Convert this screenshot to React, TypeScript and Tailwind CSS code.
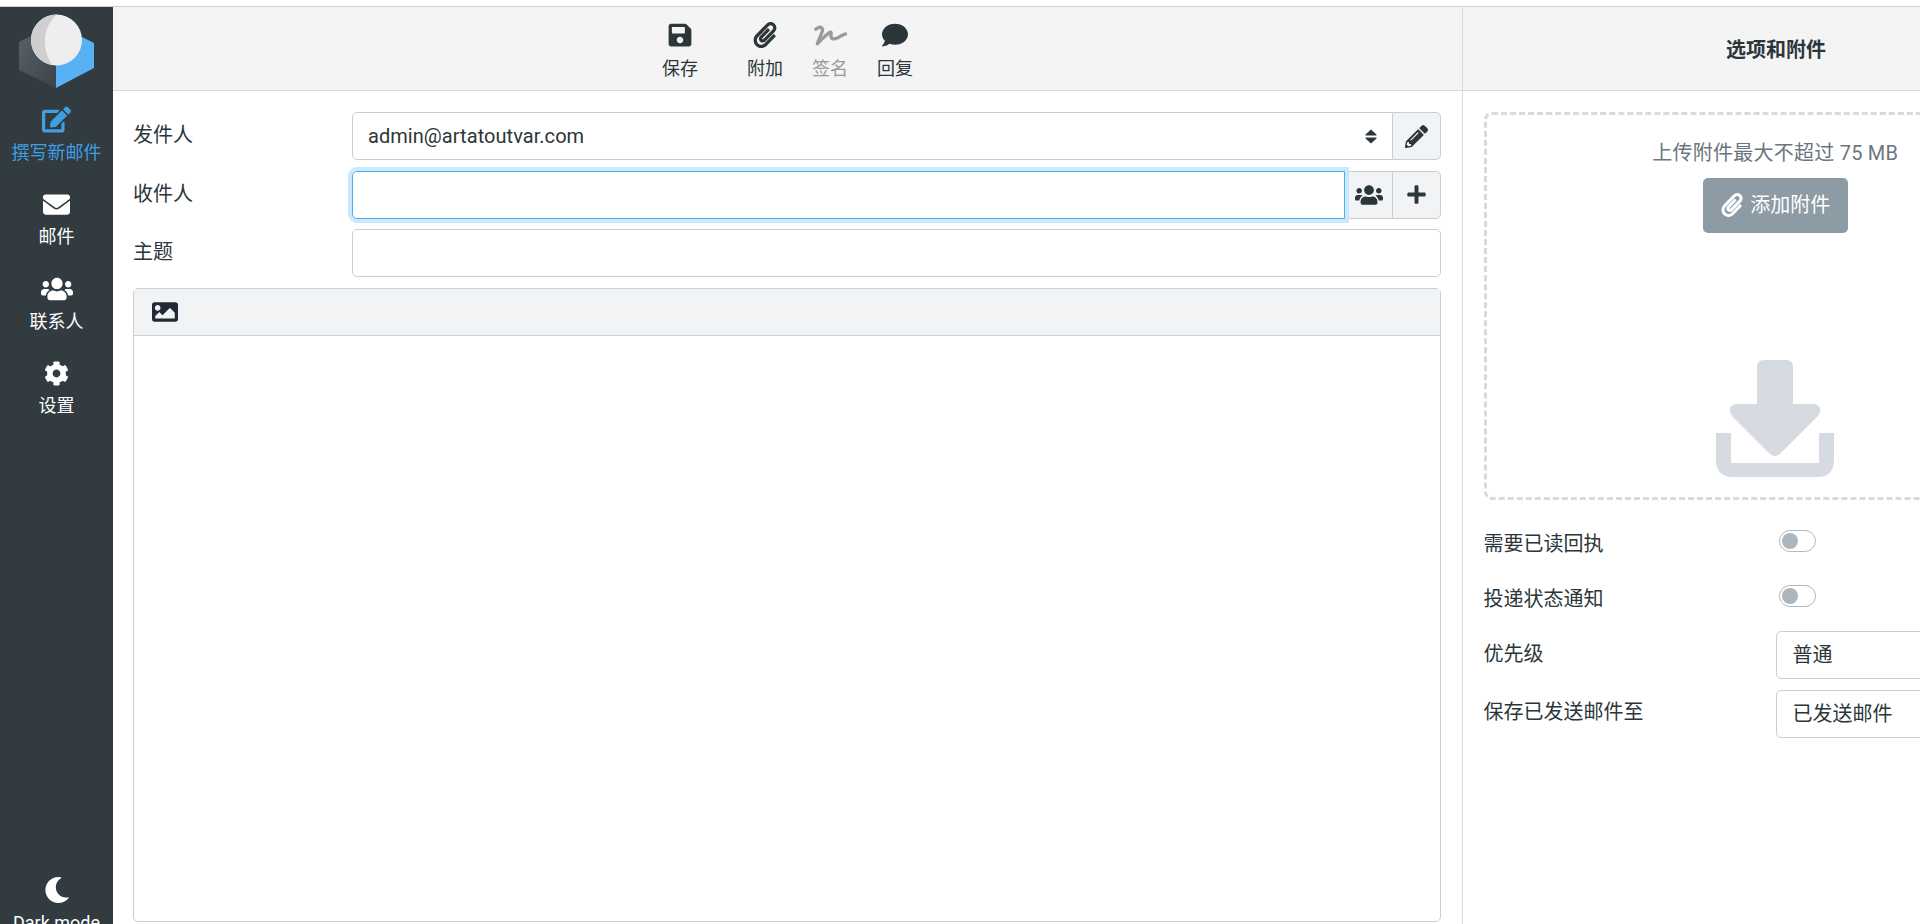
import React from "react";
import {
  FaEdit, FaEnvelope, FaUsers, FaCog, FaSave, FaPaperclip, FaSignature, FaComment,
  FaImage, FaPencilAlt, FaPlus, FaMoon,
} from "react-icons/fa";

const font = "[font-family:Roboto,'Noto_Sans_CJK_SC',sans-serif]";

function NavItem({ icon, label, active }: { icon: React.ReactNode; label: string; active?: boolean }) {
  return (
    <div className={`flex h-[84.5px] flex-col items-center ${active ? "text-[#3f9fe3]" : "text-white"}`}>
      <div className="mt-[18px] flex h-[28px] items-center justify-center">{icon}</div>
      <div className="mt-[5px] text-[18px] leading-[27px] whitespace-nowrap">{label}</div>
    </div>
  );
}

function ToolButton({ icon, label, muted }: { icon: React.ReactNode; label: string; muted?: boolean }) {
  return (
    <div className={`flex w-[65px] flex-col items-center ${muted ? "text-[#9a9a9a]" : "text-[#2c363a]"}`}>
      <div className="flex h-[32px] items-center justify-center">{icon}</div>
      <div className="mt-[4px] text-[18px] leading-[27px]">{label}</div>
    </div>
  );
}

function Field({ label, children }: { label: string; children: React.ReactNode }) {
  return (
    <div className="flex h-[48px]">
      <div className="w-[219px] shrink-0 pt-[8px] text-[20px] leading-[30px] text-[#2c363a]">{label}</div>
      <div className="flex min-w-0 flex-1">{children}</div>
    </div>
  );
}

function Addon({ children, last }: { children: React.ReactNode; last?: boolean }) {
  return (
    <div className={`flex w-[48px] shrink-0 items-center justify-center border-y border-r border-[#c9cfd3] bg-[#f1f3f5] text-[#2c363a] ${last ? "rounded-r-[5px]" : ""}`}>
      {children}
    </div>
  );
}

function Toggle() {
  return (
    <div className="flex h-[22px] w-[37px] items-center rounded-full border border-[#b4b9bf] bg-white pl-[2px]">
      <div className="h-[16px] w-[16px] rounded-full bg-[#adb5bd]" />
    </div>
  );
}

function SelectArrows() {
  return (
    <svg width="12" height="15" viewBox="0 0 12 15" className="block" fill="#2c363a">
      <path d="M6 0.5 L11.5 5.5 Q11.8 6.5 11 6.5 H1 Q0.2 6.5 0.5 5.5 Z" />
      <path d="M6 14.5 L11.5 9.5 Q11.8 8.5 11 8.5 H1 Q0.2 8.5 0.5 9.5 Z" />
    </svg>
  );
}

function UploadIcon() {
  return (
    <svg width="118" height="117" viewBox="0 0 118 117" className="block">
      <path
        d="M48 0 H 70 Q 77 0 77 7 V 44 H 98 Q 108 46 102 56 L 64 94 Q 59 98 54 94 L 16 56 Q 10 46 20 44 H 41 V 7 Q 41 0 48 0 Z"
        fill="#d5dbe0"
      />
      <path
        d="M0 73 H 15 V 103 H 103 V 73 H 118 V 100 Q 118 117 101 117 H 17 Q 0 117 0 100 Z"
        fill="#d5dbe0"
      />
    </svg>
  );
}

function Logo() {
  return (
    <svg width="113" height="84" viewBox="0 0 113 84" className="block">
      <defs>
        <linearGradient id="logoLeft" x1="0" y1="0" x2="1" y2="1">
          <stop offset="0" stopColor="#59636a" />
          <stop offset="1" stopColor="#3b4348" />
        </linearGradient>
      </defs>
      <path d="M19 35 L45 22 L56 58 V81 L19 63 Z" fill="url(#logoLeft)" />
      <path d="M56 58 L82 30 L94 36 V61 L56 81 Z" fill="#56b2f5" />
      <circle cx="56.5" cy="33" r="25.5" fill="#eeeeee" />
      <path d="M57 7.5 A25.5 25.5 0 0 0 52 58.1 C 42 42 42 20 57 7.5 Z" fill="#cfcfcf" />
    </svg>
  );
}

export default function App() {
  return (
    <div className={`h-[924px] w-[1920px] overflow-hidden bg-white ${font}`}>
      <div className="h-[6px] bg-white" />
      <div className="flex h-[918px] w-[2089px] border-t border-[#cfcfcf]">
        <nav className="flex w-[113px] shrink-0 flex-col bg-[#313b40]">
          <div className="h-[80.5px] shrink-0"><Logo /></div>
          <NavItem active icon={<FaEdit className="text-[29px]" />} label="撰写新邮件" />
          <NavItem icon={<FaEnvelope className="text-[27px]" />} label="邮件" />
          <NavItem icon={<FaUsers className="text-[32px]" />} label="联系人" />
          <NavItem icon={<FaCog className="text-[25px]" />} label="设置" />
          <div className="flex-1" />
          <div className="mb-[-12px] flex flex-col items-center text-white">
            <FaMoon className="text-[26px]" />
            <div className="mt-[6px] text-[18px] leading-[27px]">Dark mode</div>
          </div>
        </nav>

        <main className="flex w-[1349px] shrink-0 flex-col">
          <div className="flex h-[84px] shrink-0 justify-center border-b border-[#d4dbde] bg-[#f4f4f4] pt-[12px]">
            <ToolButton icon={<FaSave className="text-[26px]" />} label="保存" />
            <div className="w-[20px]" />
            <ToolButton icon={<FaPaperclip className="text-[26px]" />} label="附加" />
            <ToolButton muted icon={<FaSignature className="text-[33px]" />} label="签名" />
            <ToolButton icon={<FaComment className="text-[26px]" />} label="回复" />
          </div>
          <div className="flex flex-1 flex-col gap-[10.5px] pt-[21px] pr-[21px] pl-[20px]">
            <Field label="发件人">
              <div className="flex flex-1 items-center justify-between rounded-l-[5px] border border-[#c9cfd3] pr-[15px] pl-[15px] text-[20px] tracking-[0.05px] text-[#2c363a]">
                <span>admin@artatoutvar.com</span>
                <SelectArrows />
              </div>
              <Addon last><FaPencilAlt className="text-[23px]" /></Addon>
            </Field>
            <Field label="收件人">
              <div className="relative z-10 flex-1 rounded-l-[5px] border border-[#4fadeb] shadow-[0_0_0_4px_#cbe9fd]" />
              <Addon><FaUsers className="text-[28px]" /></Addon>
              <Addon last><FaPlus className="text-[21px]" /></Addon>
            </Field>
            <Field label="主题">
              <div className="flex-1 rounded-[5px] border border-[#c9cfd3]" />
            </Field>
            <div className="flex h-[634px] flex-col rounded-[5px] border border-[#c9cfd3]">
              <div className="flex h-[47px] shrink-0 items-center border-b border-[#c9cfd3] bg-[#f1f3f5] pl-[18px] text-[#212a36]">
                <FaImage className="text-[26px]" />
              </div>
              <div className="flex-1" />
            </div>
          </div>
        </main>

        <aside className="flex w-[627px] shrink-0 flex-col border-l border-[#d4dbde]">
          <div className="flex h-[84px] shrink-0 items-center justify-center border-b border-[#d4dbde] bg-[#f4f4f4] pt-[2px] text-[20px] font-bold text-[#2c363a]">
            选项和附件
          </div>
          <div className="pt-[20.5px] pr-[22px] pl-[20.5px]">
            <div className="flex h-[388px] flex-col items-center rounded-[8px] border-[3px] border-dashed border-[#d5dbdf] pt-[23px]">
              <div className="text-[20px] leading-[30px] tracking-[0.25px] text-[#6c757d]">上传附件最大不超过 75 MB</div>
              <div className="mt-[10px] flex h-[55px] w-[145px] items-center justify-center gap-[6px] rounded-[5px] bg-[#8c9ba4] text-[20px] text-white">
                <FaPaperclip className="text-[24px]" />
                <span>添加附件</span>
              </div>
              <div className="mt-[127px]"><UploadIcon /></div>
            </div>
            <div className="mt-[29px] grid grid-cols-[292px_1fr] items-start text-[20px] text-[#2c363a]">
              <div className="leading-[30px]">需要已读回执</div>
              <div className="pt-[1px] pl-[3px]"><Toggle /></div>
              <div className="mt-[25px] leading-[30px]">投递状态通知</div>
              <div className="mt-[25px] pt-[1px] pl-[3px]"><Toggle /></div>
              <div className="mt-[25px] leading-[30px]">优先级</div>
              <div className="mt-[17px] flex h-[48px] items-center rounded-[5px] border border-[#c9cfd3] px-[16px]">普通</div>
              <div className="mt-[18px] leading-[30px]">保存已发送邮件至</div>
              <div className="mt-[11px] flex h-[48px] items-center rounded-[5px] border border-[#c9cfd3] px-[16px]">已发送邮件</div>
            </div>
          </div>
        </aside>
      </div>
    </div>
  );
}
